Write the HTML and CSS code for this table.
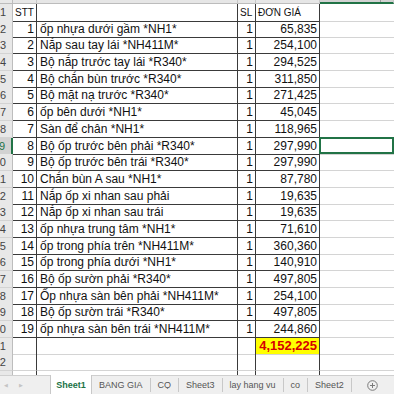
FILE: index.html
```html
<!DOCTYPE html>
<html lang="vi">
<head>
<meta charset="utf-8">
<link rel="stylesheet" href="styles.css">
</head>
<body>
<div class="sheet">
  <div class="row colhead">
    <div class="rh corner"></div>
    <div class="ch">A</div>
    <div class="ch">B</div>
    <div class="ch">C</div>
    <div class="ch">D</div>
    <div class="ch active"><span class="tick"></span></div>
  </div>
  <div class="row">
    <div class="rh"><span>1</span></div>
    <div class="c t hd">STT</div>
    <div class="c t"></div>
    <div class="c t hd">SL</div>
    <div class="c t hd">ĐƠN GIÁ</div>
    <div class="c e"></div>
  </div>
  <div class="row"><div class="rh"><span>2</span></div><div class="c t n">1</div><div class="c t s">ốp nhựa dưới gầm *NH1*</div><div class="c t n">1</div><div class="c t n">65,835</div><div class="c e"></div></div>
  <div class="row"><div class="rh"><span>3</span></div><div class="c t n">2</div><div class="c t s">Nắp sau tay lái *NH411M*</div><div class="c t n">1</div><div class="c t n">254,100</div><div class="c e"></div></div>
  <div class="row"><div class="rh"><span>4</span></div><div class="c t n">3</div><div class="c t s">Bộ nắp trước tay lái *R340*</div><div class="c t n">1</div><div class="c t n">294,525</div><div class="c e"></div></div>
  <div class="row"><div class="rh"><span>5</span></div><div class="c t n">4</div><div class="c t s">Bộ chắn bùn trước *R340*</div><div class="c t n">1</div><div class="c t n">311,850</div><div class="c e"></div></div>
  <div class="row"><div class="rh"><span>6</span></div><div class="c t n">5</div><div class="c t s">Bộ mặt nạ trước *R340*</div><div class="c t n">1</div><div class="c t n">271,425</div><div class="c e"></div></div>
  <div class="row"><div class="rh"><span>7</span></div><div class="c t n">6</div><div class="c t s">ốp bên dưới *NH1*</div><div class="c t n">1</div><div class="c t n">45,045</div><div class="c e"></div></div>
  <div class="row"><div class="rh"><span>8</span></div><div class="c t n">7</div><div class="c t s">Sàn để chân *NH1*</div><div class="c t n">1</div><div class="c t n">118,965</div><div class="c e"></div></div>
  <div class="row"><div class="rh sel"><span>9</span></div><div class="c t n">8</div><div class="c t s">Bộ ốp trước bên phải *R340*</div><div class="c t n">1</div><div class="c t n">297,990</div><div class="c e cur"></div></div>
  <div class="row"><div class="rh"><span>10</span></div><div class="c t n">9</div><div class="c t s">Bộ ốp trước bên trái *R340*</div><div class="c t n">1</div><div class="c t n">297,990</div><div class="c e"></div></div>
  <div class="row"><div class="rh"><span>11</span></div><div class="c t n">10</div><div class="c t s">Chắn bùn A sau *NH1*</div><div class="c t n">1</div><div class="c t n">87,780</div><div class="c e"></div></div>
  <div class="row"><div class="rh"><span>12</span></div><div class="c t n">11</div><div class="c t s">Nắp ốp xi nhan sau phải</div><div class="c t n">1</div><div class="c t n">19,635</div><div class="c e"></div></div>
  <div class="row"><div class="rh"><span>13</span></div><div class="c t n">12</div><div class="c t s">Nắp ốp xi nhan sau trái</div><div class="c t n">1</div><div class="c t n">19,635</div><div class="c e"></div></div>
  <div class="row"><div class="rh"><span>14</span></div><div class="c t n">13</div><div class="c t s">ốp nhựa trung tâm *NH1*</div><div class="c t n">1</div><div class="c t n">71,610</div><div class="c e"></div></div>
  <div class="row"><div class="rh"><span>15</span></div><div class="c t n">14</div><div class="c t s">ốp trong phía trên *NH411M*</div><div class="c t n">1</div><div class="c t n">360,360</div><div class="c e"></div></div>
  <div class="row"><div class="rh"><span>16</span></div><div class="c t n">15</div><div class="c t s">ốp trong phía dưới *NH1*</div><div class="c t n">1</div><div class="c t n">140,910</div><div class="c e"></div></div>
  <div class="row"><div class="rh"><span>17</span></div><div class="c t n">16</div><div class="c t s">Bộ ốp sườn phải *R340*</div><div class="c t n">1</div><div class="c t n">497,805</div><div class="c e"></div></div>
  <div class="row"><div class="rh"><span>18</span></div><div class="c t n">17</div><div class="c t s">Ốp nhựa sàn bên phải *NH411M*</div><div class="c t n">1</div><div class="c t n">254,100</div><div class="c e"></div></div>
  <div class="row"><div class="rh"><span>19</span></div><div class="c t n">18</div><div class="c t s">Bộ ốp sườn trái *R340*</div><div class="c t n">1</div><div class="c t n">497,805</div><div class="c e"></div></div>
  <div class="row"><div class="rh"><span>20</span></div><div class="c t n">19</div><div class="c t s">ốp nhựa sàn bên trái *NH411M*</div><div class="c t n">1</div><div class="c t n">244,860</div><div class="c e"></div></div>
  <div class="row"><div class="rh"><span>21</span></div><div class="c u"></div><div class="c u"></div><div class="c u"></div><div class="c u n total">4,152,225</div><div class="c e"></div></div>
  <div class="row"><div class="rh"><span>22</span></div><div class="c u"></div><div class="c u"></div><div class="c u"></div><div class="c u"></div><div class="c e"></div></div>
  <div class="row"><div class="rh"><span>23</span></div><div class="c u"></div><div class="c u"></div><div class="c u"></div><div class="c u"></div><div class="c e"></div></div>
</div>
<div class="tabs">
  <div class="nav"><span class="arr">&#9664;</span><span class="arr">&#9654;</span></div>
  <div class="tab on">Sheet1</div>
  <div class="tab">BANG GIA</div>
  <div class="tab">CỌ</div>
  <div class="tab">Sheet3</div>
  <div class="tab">lay hang vu</div>
  <div class="tab">co</div>
  <div class="tab">Sheet2</div>
  <div class="add">
    <svg width="11" height="11" viewBox="0 0 11 11"><circle cx="5.5" cy="5.5" r="4.8" fill="none" stroke="#7a7a7a" stroke-width="1"/><path d="M5.5 3v5M3 5.5h5" stroke="#7a7a7a" stroke-width="1"/></svg>
  </div>
</div>
</body>
</html>
```

FILE: styles.css
```css
* { box-sizing: border-box; }
html, body { margin: 0; padding: 0; background: #fff; }
body {
  width: 394px;
  height: 394px;
  overflow: hidden;
  font-family: "Liberation Sans", Arial, sans-serif;
  color: #111;
}
.sheet {
  height: 375px;
  overflow: hidden;
}
.row {
  display: grid;
  grid-template-columns: 13px 24px 201px 18px 64px 74px;
  height: 16.7px;
}
.colhead { height: 4px; }
.ch {
  background: #e6e6e6;
  border-right: 1px solid #c8c8c8;
  border-bottom: 1px solid #bcbcbc;
  font-size: 0;
  overflow: hidden;
  position: relative;
}
.ch.active {
  background: #d2d2d2;
  border-bottom: 2px solid #217346;
}
.tick {
  position: absolute;
  left: 60px;
  top: 0;
  width: 1px;
  height: 3px;
  background: #9a9a9a;
}
.rh {
  background: #e8e8e8;
  border-right: 1px solid #bdbdbd;
  border-bottom: 1px solid #d3d3d3;
  font-size: 11px;
  color: #444;
  overflow: hidden;
  direction: rtl;
  text-align: right;
  padding-right: 6px;
  line-height: 16px;
  white-space: nowrap;
}
.rh.corner { border-bottom: 1px solid #bcbcbc; }
.rh.sel {
  background: #d2d2d2;
  color: #217346;
  border-right: 2px solid #217346;
}
.c {
  font-size: 12px;
  line-height: 16px;
  white-space: nowrap;
  overflow: visible;
}
.t {
  border-right: 1px solid #3a3a3a;
  border-bottom: 1px solid #3a3a3a;
}
.u {
  border-right: 1px solid #3a3a3a;
  border-bottom: 1px solid #d4d4d4;
}
.e {
  border-bottom: 1px solid #d4d4d4;
}
.e.cur {
  box-shadow: inset 0 0 0 2px #217346;
  margin-left: -1px;
  margin-top: -1px;
  height: calc(100% + 1px);
}
.n {
  text-align: right;
  padding-right: 2px;
}
.s {
  padding-left: 3px;
  position: relative;
  z-index: 1;
}
.hd {
  font-size: 10px;
  padding-left: 2px;
  line-height: 17px;
}
.total {
  background: #ffff00;
  color: #d60000;
  font-weight: bold;
  font-size: 13px;
  padding-right: 2px;
}
.tabs {
  height: 19px;
  background: #efefef;
  border-top: 1px solid #cfcfcf;
  display: flex;
  align-items: stretch;
  font-family: "Liberation Sans", Arial, sans-serif;
  font-size: 9px;
  color: #555;
}
.nav {
  width: 50px;
  display: flex;
  align-items: center;
  gap: 11px;
  padding-left: 4px;
}
.arr {
  font-size: 5px;
  color: #c4c4c4;
}
.tab {
  display: flex;
  align-items: center;
  padding: 0 7px;
  border-right: 1px solid #c8c8c8;
  margin: 2px 0;
  white-space: nowrap;
}
.tab.on {
  background: #fff;
  color: #217346;
  font-weight: bold;
  margin: -1px 0 0 0;
  padding: 0;
  border-left: 1px solid #c8c8c8;
  width: 42px;
  justify-content: center;
}
.add {
  flex: 1;
  display: flex;
  align-items: center;
  justify-content: center;
}
```
